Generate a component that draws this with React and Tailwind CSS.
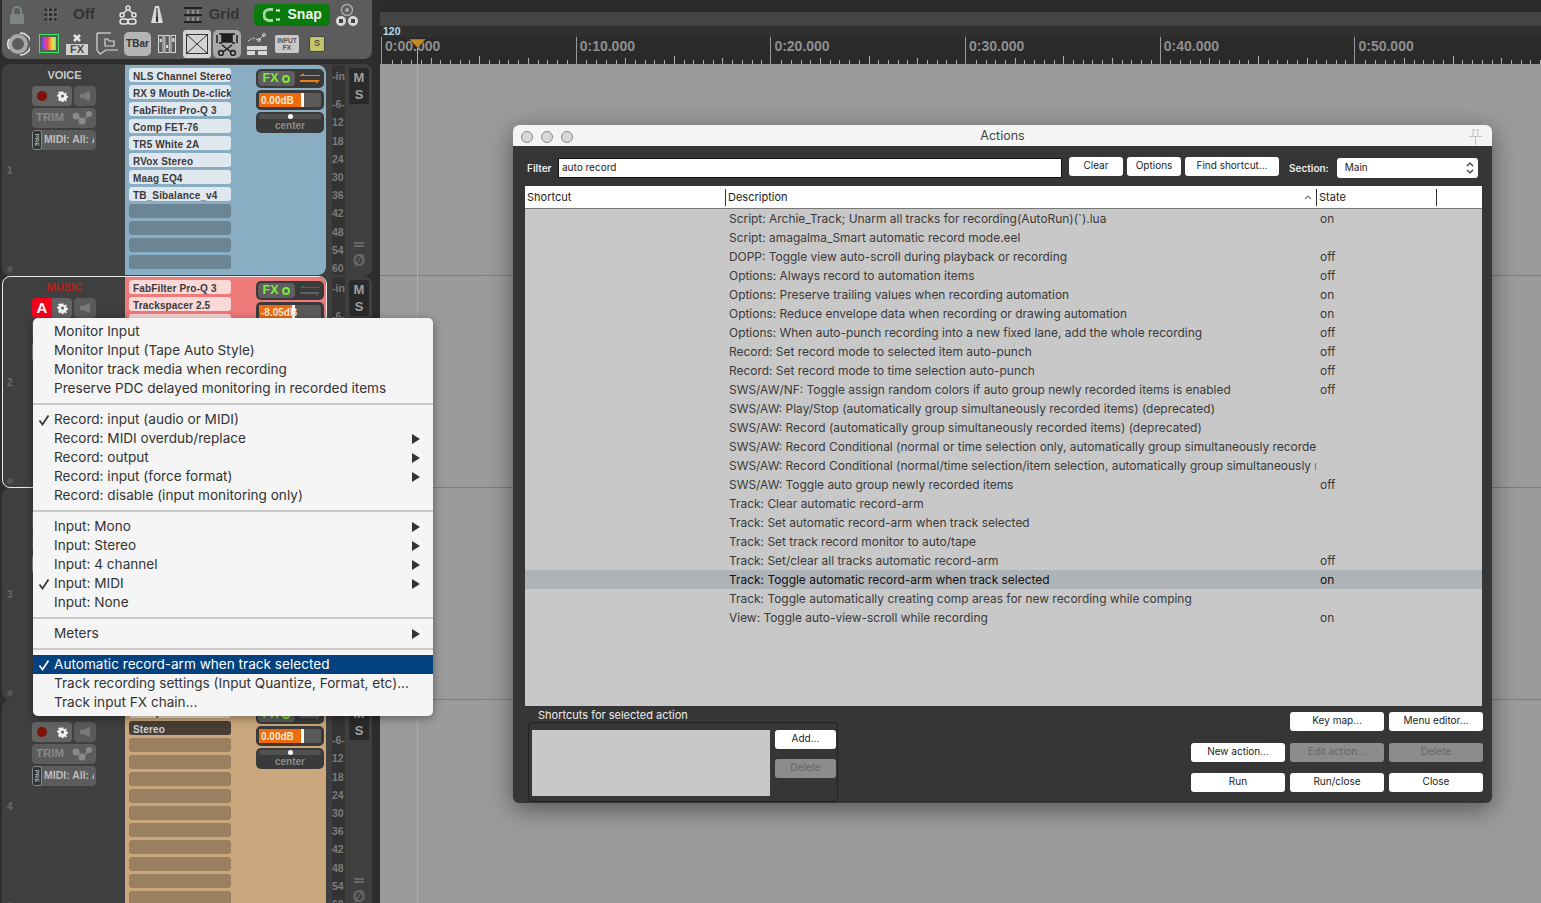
import React from 'react'

const ROWS = [
  ['Script: Archie_Track; Unarm all tracks for recording(AutoRun)(`).lua', 'on'],
  ['Script: amagalma_Smart automatic record mode.eel', ''],
  ['DOPP: Toggle view auto-scroll during playback or recording', 'off'],
  ['Options: Always record to automation items', 'off'],
  ['Options: Preserve trailing values when recording automation', 'on'],
  ['Options: Reduce envelope data when recording or drawing automation', 'on'],
  ['Options: When auto-punch recording into a new fixed lane, add the whole recording', 'off'],
  ['Record: Set record mode to selected item auto-punch', 'off'],
  ['Record: Set record mode to time selection auto-punch', 'off'],
  ['SWS/AW/NF: Toggle assign random colors if auto group newly recorded items is enabled', 'off'],
  ['SWS/AW: Play/Stop (automatically group simultaneously recorded items) (deprecated)', ''],
  ['SWS/AW: Record (automatically group simultaneously recorded items) (deprecated)', ''],
  ['SWS/AW: Record Conditional (normal or time selection only, automatically group simultaneously recorded items)', ''],
  ['SWS/AW: Record Conditional (normal/time selection/item selection, automatically group simultaneously recorded items)', ''],
  ['SWS/AW: Toggle auto group newly recorded items', 'off'],
  ['Track: Clear automatic record-arm', ''],
  ['Track: Set automatic record-arm when track selected', ''],
  ['Track: Set track record monitor to auto/tape', ''],
  ['Track: Set/clear all tracks automatic record-arm', 'off'],
  ['Track: Toggle automatic record-arm when track selected', 'on', true],
  ['Track: Toggle automatically creating comp areas for new recording while comping', ''],
  ['View: Toggle auto-view-scroll while recording', 'on'],
]

const MENU = [
  [
    { label: 'Monitor Input' },
    { label: 'Monitor Input (Tape Auto Style)' },
    { label: 'Monitor track media when recording' },
    { label: 'Preserve PDC delayed monitoring in recorded items' },
  ],
  [
    { label: 'Record: input (audio or MIDI)', checked: true },
    { label: 'Record: MIDI overdub/replace', sub: true },
    { label: 'Record: output', sub: true },
    { label: 'Record: input (force format)', sub: true },
    { label: 'Record: disable (input monitoring only)' },
  ],
  [
    { label: 'Input: Mono', sub: true },
    { label: 'Input: Stereo', sub: true },
    { label: 'Input: 4 channel', sub: true },
    { label: 'Input: MIDI', sub: true, checked: true },
    { label: 'Input: None' },
  ],
  [{ label: 'Meters', sub: true }],
  [
    { label: 'Automatic record-arm when track selected', checked: true, active: true },
    { label: 'Track recording settings (Input Quantize, Format, etc)...' },
    { label: 'Track input FX chain...' },
  ],
]

const TICK_LABELS = ['0:00.000', '0:10.000', '0:20.000', '0:30.000', '0:40.000', '0:50.000']
const TICKS = Array.from({ length: 20 }, (_, i) => i)
const METER_LABELS = ['-inf', '-6-', '12', '18', '24', '30', '36', '42', '48', '54', '60']

const TRACKS = [
  {
    name: 'VOICE',
    number: '1',
    panel: 'bg-[#89aec3]',
    slot: 'bg-[#e0e8ef] text-[#3a3a3a]',
    empty: 'bg-[#6c8594]',
    slots: ['NLS Channel Stereo', 'RX 9 Mouth De-click', 'FabFilter Pro-Q 3', 'Comp FET-76', 'TR5 White 2A', 'RVox Stereo', 'Maag EQ4', 'TB_Sibalance_v4'],
    total: 12,
    volume: '0.00dB',
  },
  {
    name: 'MUSIC',
    number: '2',
    selected: true,
    panel: 'bg-[#ee7a7a]',
    slot: 'bg-[#f9d8d8] text-[#3a3a3a]',
    empty: 'bg-[#b45f5f]',
    slots: ['FabFilter Pro-Q 3', 'Trackspacer 2.5', 'Stereo'],
    total: 12,
    volume: '-8.05dB',
  },
  {
    name: 'DRUMS',
    number: '3',
    panel: 'bg-[#7f9d77]',
    slot: 'bg-[#dfe8dc] text-[#3a3a3a]',
    empty: 'bg-[#64785e]',
    slots: ['Stereo'],
    total: 12,
    volume: '0.00dB',
  },
  {
    name: 'SYNTH',
    number: '4',
    panel: 'bg-[#c9a67c]',
    slot: 'bg-[#efe6da] text-[#3a3a3a]',
    empty: 'bg-[#9a8060]',
    slots: ['Comp', 'Stereo'],
    dark: true,
    total: 12,
    volume: '0.00dB',
  },
]

function LockIcon() {
  return (
    <svg width="16" height="20" viewBox="0 0 16 20" fill="none">
      <path d="M4 9V6a4 4 0 0 1 8 0v3" stroke="#7c8583" strokeWidth="2" />
      <rect x="1" y="9" width="14" height="10" rx="1" fill="#7c8583" />
    </svg>
  )
}

function DotGridIcon() {
  const cells = [0, 5, 10]
  return (
    <svg width="14" height="14" viewBox="0 0 15 15" fill="#2f2f2f">
      {cells.map((y) =>
        cells.map((x) => <rect key={`${x}-${y}`} x={x} y={y} width="4" height="4" stroke="#8a8a8a" strokeWidth="0.5" />)
      )}
    </svg>
  )
}

function RippleIcon() {
  return (
    <svg width="20" height="20" viewBox="0 0 20 20" fill="none" stroke="#e4e4e4" strokeWidth="1.5">
      <circle cx="10" cy="3" r="2" />
      <circle cx="4" cy="10" r="2" />
      <circle cx="16" cy="10" r="2" />
      <path d="M9 5l-4 3.5M11 5l4 3.5" />
      <rect x="2" y="14" width="8" height="5" rx="2.5" />
      <rect x="10" y="14" width="8" height="5" rx="2.5" />
    </svg>
  )
}

function MetronomeIcon() {
  return (
    <svg width="14" height="20" viewBox="0 0 14 20">
      <path d="M5 1h4l4 17H1z" fill="#d9d9d9" />
      <path d="M6.4 3h1.2l.6 10H5.8z" fill="#5a5a5a" />
      <rect x="6" y="12" width="2" height="5" fill="#2d2d2d" />
    </svg>
  )
}

function GridLinesIcon() {
  return (
    <svg width="18" height="16" viewBox="0 0 18 16" fill="none" stroke="#222">
      <path d="M0 1h18M0 8h18M0 15h18" strokeWidth="2" />
      <path d="M4 3v4M9 3v4M14 3v4M4 10v4M9 10v4M14 10v4" stroke="#bdbdbd" />
    </svg>
  )
}

function SnapGlyph() {
  return (
    <svg width="18" height="14" viewBox="0 0 18 14" fill="none">
      <path d="M10 1.500H6.500a5.500 5.500 0 0 0 0 11H10" stroke="#a6d8a6" strokeWidth="3" />
      <path d="M13 2.500h4M13 11.500h4" stroke="#e8ffe8" strokeWidth="2" />
    </svg>
  )
}

function ReelsIcon() {
  return (
    <svg width="24" height="24" viewBox="0 0 24 24">
      <circle cx="12" cy="7" r="5.5" fill="none" stroke="#a8a8a8" strokeWidth="1.5" />
      <circle cx="12" cy="7" r="2" fill="#a8a8a8" />
      <circle cx="6" cy="18" r="5" fill="#d9d9d9" />
      <circle cx="18" cy="18" r="5" fill="#d9d9d9" />
      <path d="M4 16h4v4H4zM16 16h4v4h-4z" fill="#444" />
    </svg>
  )
}

function RingIcon() {
  return (
    <svg width="24" height="24" viewBox="0 0 24 24" fill="none">
      <circle cx="12" cy="12" r="8" stroke="#a8a8a8" strokeWidth="4" />
      <path d="M3 7a11 11 0 0 0 0 10" stroke="#e6e6e6" strokeWidth="1.5" />
      <path d="M14 1a11 11 0 0 1 0 22" stroke="#e6e6e6" strokeWidth="1.5" />
    </svg>
  )
}

function FxRemoveIcon() {
  return (
    <div className="flex w-[22px] flex-col items-center">
      <svg width="10" height="10" viewBox="0 0 10 10" stroke="#e4e4e4" strokeWidth="2.5">
        <path d="M2 2l6 6M8 2l-6 6" />
      </svg>
      <span className="mt-[1px] w-full bg-[#d0d0d0] text-center text-[11px] leading-[11px] font-bold text-[#4a4a4a]">FX</span>
    </div>
  )
}

function FolderIcon() {
  return (
    <svg width="22" height="24" viewBox="0 0 22 24" fill="none" stroke="#dcdcdc">
      <path d="M1 1v17l3 4 6-4h12" strokeWidth="1.2" />
      <path d="M1 1h14" strokeWidth="1.2" />
      <path d="M9 14V7h3l1 2h5v5z" strokeWidth="1.2" />
    </svg>
  )
}

function MixerIcon() {
  return (
    <svg width="18" height="18" viewBox="0 0 18 18" fill="none" stroke="#d8d8d8">
      <rect x="0.5" y="0.5" width="4.5" height="17" />
      <rect x="6.8" y="0.5" width="4.5" height="17" />
      <rect x="13" y="0.5" width="4.5" height="17" />
      <path d="M2.7 4v3M9 10v3M15.3 3v4" strokeWidth="2" />
    </svg>
  )
}

function ScissorsIcon() {
  return (
    <svg width="22" height="24" viewBox="0 0 22 24" fill="none" stroke="#1e1e1e" strokeWidth="1.5">
      <path d="M1 3v8M21 3v8M3 2h3M16 2h3M3 11h3M16 11h3" />
      <rect x="6" y="2" width="10" height="8" fill="#1e1e1e" />
      <path d="M6 13l9 7M16 13l-9 7" />
      <circle cx="5" cy="21" r="2.4" />
      <circle cx="17" cy="21" r="2.4" />
    </svg>
  )
}

function ItemSplitIcon() {
  return (
    <svg width="22" height="24" viewBox="0 0 22 24" fill="none" stroke="#d8d8d8">
      <path d="M2 9l5-3 6 2 5-5" strokeDasharray="2 1" />
      <circle cx="13" cy="8" r="1.5" />
      <circle cx="18" cy="3" r="1.5" />
      <path d="M1 14h20v4H1zM1 19h8v4H1zM12 19h9v4h-9z" fill="#d8d8d8" stroke="none" />
    </svg>
  )
}

function CogIcon({ color = '#f0f0f0' }) {
  return (
    <svg width="11" height="11" viewBox="0 0 20 20" fill={color}>
      <path
        fillRule="evenodd"
        d="M8 0h4l.6 3 2.2.9 2.6-1.7 2.4 2.4-1.7 2.6.9 2.2 3 .6v4l-3 .6-.9 2.2 1.7 2.6-2.4 2.4-2.6-1.7-2.2.9-.6 3H8l-.6-3-2.2-.9-2.6 1.7L.2 16.400l1.7-2.600L1 11.600l-3-.6v-4l3-.6.9-2.200L.2 1.600 2.600-.8l2.600 1.700L7.400 0zM10 6.500a3.500 3.500 0 1 0 0 7 3.500 3.500 0 0 0 0-7z"
        transform="translate(1.8 1) scale(.82)"
      />
    </svg>
  )
}

function SpeakerIcon() {
  return (
    <svg width="12" height="12" viewBox="0 0 12 12" fill="#7a7a7a">
      <path d="M1 4h3l7-3v10L4 8H1z" />
    </svg>
  )
}

function RouteIcon() {
  return (
    <svg width="20" height="14" viewBox="0 0 20 14" fill="#8a8a8a">
      <circle cx="4" cy="5" r="3.500" />
      <circle cx="10" cy="10" r="3.500" />
      <circle cx="17" cy="3" r="3" />
      <path d="M4 4l7 5 5-6 1 1-6 7-7-5z" />
    </svg>
  )
}

function RoutingArrows({ color, tip }) {
  return (
    <svg width="20" height="12" viewBox="0 0 20 12">
      <path d="M0 2h14l6 0v1H0z" fill={color} />
      <path d="M4 0L0 3h4z" fill={color} />
      <path d="M0 7h20l-4 4V9H0z" fill={tip} />
    </svg>
  )
}

function TrackControls({ track }) {
  const routeColor = track.number === '1' ? '#f07d1a' : '#0e7c6c'
  const routeTip = track.number === '1' ? '#f07d1a' : '#5c6064'
  const vuWidth = track.number === '2' ? 'w-[33px]' : 'w-[42px]'
  return (
    <div className="mt-[4px] ml-[25px] flex w-[68px] flex-col gap-[2px]">
      <div className="flex h-[19px] items-center rounded-[5px] bg-[#3a3a3a] px-[2px]">
        <div className="flex h-[15px] w-[37px] items-center justify-center gap-[4px] rounded-[4px] bg-[#5e5e5e]">
          <span className="font-['Liberation_Sans',sans-serif] text-[12.500px] leading-none font-bold text-[#7bec3c]">FX</span>
          <span className="h-[8px] w-[8px] rounded-full border-2 border-[#7bec3c]" />
        </div>
        <span className="ml-[5px] flex">
          <RoutingArrows color={routeColor} tip={routeTip} />
        </span>
      </div>
      <div className="flex h-[20px] items-center rounded-[5px] bg-[#3a3a3a] px-[3px]">
        <div className="relative flex h-[14px] w-full rounded-[2px] bg-[#5a5a5a]">
          <div className={`${vuWidth} h-full bg-[#f0690a]`} />
          <div className="h-full w-[3px] bg-white" />
          <span className="absolute top-0 left-[2px] font-['Liberation_Sans',sans-serif] text-[10px] leading-[15px] font-bold text-[#f4ead8]">
            {track.volume}
          </span>
        </div>
      </div>
      <div className="flex h-[21px] flex-col items-center rounded-[5px] bg-[#3a3a3a] px-[3px] pt-[2px]">
        <div className="relative flex h-[5px] w-full shrink-0 items-center justify-center rounded-[2px] bg-[#505050]">
          <span className="h-[5px] w-[5px] rounded-full bg-white" />
        </div>
        <span className="font-['Liberation_Sans',sans-serif] text-[10px] leading-[14px] font-bold text-[#8a8a8a]">center</span>
      </div>
    </div>
  )
}

function Track({ track }) {
  const blanks = Array.from({ length: track.total - track.slots.length }, (_, i) => i)
  const border = track.selected ? 'border border-[#e8e8e8]' : 'border border-transparent'
  return (
    <div className="flex h-[212px] w-[370px] rounded-[8px] bg-[#3f3f3f]">
      <div className={`flex h-[212px] w-[325px] overflow-hidden rounded-[8px] ${border}`}>
        <div className="relative flex w-[122px] shrink-0 flex-col items-end pr-[29px] font-['Liberation_Sans',sans-serif]">
          <div className={`mt-[4px] h-[13px] w-full pl-[30px] text-center text-[11px] leading-[13px] font-bold ${track.selected ? 'text-[#b5231d]' : 'text-[#c8c8c8]'}`}>
            {track.name}
          </div>
          <div className="mt-[4px] flex gap-[2px]">
            <div className="flex h-[20px] w-[40px] items-center overflow-hidden rounded-[4px] bg-[#636363]">
              {track.selected ? (
                <span className="flex h-full w-[20px] items-center justify-center bg-[#f4001c] text-[15px] font-bold text-white">A</span>
              ) : (
                <span className="flex w-[20px] justify-center">
                  <span className="h-[10px] w-[10px] rounded-full bg-[#7f1208]" />
                </span>
              )}
              <span className="flex w-[20px] justify-center">
                <CogIcon />
              </span>
            </div>
            <div className="flex h-[20px] w-[22px] items-center justify-center rounded-[4px] bg-[#5a5a5a]">
              <SpeakerIcon />
            </div>
          </div>
          <div className="mt-[2px] flex h-[20px] w-[64px] items-center justify-between rounded-[4px] bg-[#5c5c5c] px-[4px]">
            <span className="text-[11.500px] font-bold text-[#8a8a8a]">TRIM</span>
            <RouteIcon />
          </div>
          <div className="mt-[2px] flex h-[20px] w-[64px] items-center overflow-hidden rounded-[4px] bg-[#5c5c5c]">
            <span className="flex h-full w-[10px] shrink-0 items-center justify-center rounded-[3px] border border-[#8a8a8a] bg-[#333]">
              <span className="rotate-90 text-[6px] leading-none font-bold text-[#bdbdbd]">PRE</span>
            </span>
            <span className="ml-[2px] w-[50px] overflow-hidden text-[10.500px] font-bold whitespace-nowrap text-[#bdbdbd]">MIDI: All: A</span>
          </div>
          <span className="absolute top-[98px] left-[4px] text-[10px] font-bold text-[#6a6a6a]">{track.number}</span>
          <span className="absolute bottom-[3px] left-[4px] h-[6px] w-[6px] rounded-full bg-[#555]" />
        </div>
        <div className={`flex min-w-0 flex-1 rounded-r-[8px] ${track.panel}`}>
          <div className="mt-[3px] ml-[4px] flex w-[102px] flex-col gap-[3px]">
            {track.slots.map((name) => (
              <div
                key={name}
                className={`h-[14px] overflow-hidden rounded-[3px] pl-[4px] font-['Liberation_Sans',sans-serif] text-[10px] leading-[17px] font-bold tracking-[0.15px] whitespace-nowrap ${
                  track.dark && name === 'Stereo' ? 'bg-[#473e36] text-[#cfcfcf]' : track.slot
                }`}
              >
                {name}
              </div>
            ))}
            {blanks.map((i) => (
              <div key={i} className={`h-[14px] rounded-[3px] ${track.empty}`} />
            ))}
          </div>
          <TrackControls track={track} />
        </div>
      </div>
      <div className="mt-[1px] ml-[5px] flex h-[210px] w-[13px] flex-col overflow-hidden rounded-[2px] bg-[#333] pt-[2px] font-['Liberation_Sans',sans-serif]">
        {METER_LABELS.map((label, i) => (
          <span key={label} className={`text-[10.500px] leading-[18.200px] font-bold whitespace-nowrap text-[#7c7c7c] ${i === 0 ? 'mb-[10px]' : ''}`}>
            {label}
          </span>
        ))}
      </div>
      <div className="mt-[4px] ml-[4px] flex w-[20px] flex-col items-center font-['Liberation_Sans',sans-serif]">
        <div className="flex h-[36px] w-[20px] flex-col items-center justify-center rounded-[3px] bg-[#2a2a2a] text-[13px] leading-[17px] font-bold text-[#a0a0a0]">
          <span>M</span>
          <span>S</span>
        </div>
        <span className="mt-[138px] h-[5px] w-[10px] border-y-2 border-[#666]" />
        <span className="mt-[5px] text-[16px] leading-[18px] font-bold text-[#666]">Ø</span>
      </div>
    </div>
  )
}

function Toolbar() {
  return (
    <div className="ml-[2px] flex h-[59px] w-[370px] flex-col rounded-b-[8px] bg-[#5c5c5c] font-['Liberation_Sans',sans-serif]">
      <div className="flex h-[28px] items-center pt-[1px]">
        <span className="ml-[7px] flex"><LockIcon /></span>
        <span className="ml-[19px] flex"><DotGridIcon /></span>
        <span className="ml-[15px] text-[15px] font-bold text-[#333]">Off</span>
        <span className="ml-[23px] flex"><RippleIcon /></span>
        <span className="ml-[12px] flex"><MetronomeIcon /></span>
        <span className="ml-[20px] flex"><GridLinesIcon /></span>
        <span className="ml-[7px] text-[15px] font-bold text-[#333]">Grid</span>
        <div className="ml-[14px] flex h-[22px] w-[76px] items-center gap-[7px] rounded-[5px] bg-[#0a7a0a] pl-[9px]">
          <SnapGlyph />
          <span className="text-[14px] font-bold text-[#eef8ee]">Snap</span>
        </div>
        <span className="ml-[5px] flex"><ReelsIcon /></span>
      </div>
      <div className="flex h-[31px] items-center">
        <span className="ml-[4px] flex"><RingIcon /></span>
        <div className="ml-[9px] flex h-[19px] w-[20px] items-center justify-center border border-[#3de860]">
          <span className="h-[13px] w-[14px] bg-[linear-gradient(90deg,#3c5ed8,#d23cc8,#f04a4a,#f0a03c,#e8e84a,#5ce85c)]" />
        </div>
        <span className="ml-[7px] flex"><FxRemoveIcon /></span>
        <span className="ml-[8px] flex"><FolderIcon /></span>
        <div className="ml-[6px] flex h-[24px] w-[27px] items-center justify-center rounded-[5px] bg-[#b5b5b5] text-[10px] font-bold text-[#333]">TBar</div>
        <span className="ml-[7px] flex"><MixerIcon /></span>
        <div className="ml-[7px] flex h-[28px] w-[28px] items-center justify-center rounded-[3px] bg-[#d4d4d4]">
          <svg width="22" height="20" viewBox="0 0 22 20" fill="none" stroke="#333">
            <rect x="0.500" y="0.500" width="21" height="19" />
            <path d="M0 0l22 20M22 0L0 20" />
          </svg>
        </div>
        <div className="ml-[2px] flex h-[28px] w-[28px] items-center justify-center rounded-[5px] bg-[#a8a8a8]">
          <ScissorsIcon />
        </div>
        <span className="ml-[5px] flex"><ItemSplitIcon /></span>
        <div className="ml-[7px] flex h-[18px] w-[24px] flex-col items-center justify-center rounded-[2px] bg-[#c8c8c8] text-[6.500px] leading-[7px] font-bold text-[#555]">
          <span>INPUT</span>
          <span>FX</span>
        </div>
        <div className="ml-[10px] flex h-[16px] w-[16px] items-center justify-center rounded-[2px] border border-[#444] bg-[#c4c46c] text-[9px] font-bold text-[#555]">S</div>
      </div>
    </div>
  )
}

function Ruler() {
  return (
    <div className="flex h-[27px] overflow-hidden bg-[#2a2a2a] pl-[1px] font-['Liberation_Sans',sans-serif]">
      {TICK_LABELS.map((label) => (
        <div key={label} className="flex h-full w-[194.700px] shrink-0 flex-col border-l border-[#9a9a9a]">
          <span className="pl-[3px] text-[14px] leading-[18px] font-bold text-[#8f8f8f]">{label}</span>
          <div className="mt-auto flex h-[8px] items-end">
            {TICKS.map((i) => (
              <div key={i} className="w-[9.730px] shrink-0">
                {i === 10 && <div className="h-[8px] w-px bg-[#b0b0b0]" />}
                {(i === 5 || i === 15) && <div className="h-[6px] w-px bg-[#b0b0b0]" />}
                {i % 5 !== 0 && <div className="h-[4px] w-px bg-[#b0b0b0]" />}
              </div>
            ))}
          </div>
        </div>
      ))}
    </div>
  )
}

function Arrange() {
  return (
    <div className="relative min-w-0 flex-1">
      <div className="h-[12px] bg-[#2b2b2b]" />
      <div className="h-[14px] bg-[#444444]" />
      <div className="h-[11px] bg-[#303030] pl-[3px] font-['Liberation_Sans',sans-serif] text-[10.500px] leading-[11px] font-bold text-[#b5dcf2]">120</div>
      <Ruler />
      <div className="h-[212px] border-b border-[#7a7a7a] bg-[#9b9b9b]" />
      <div className="h-[212px] border-b border-[#7a7a7a] bg-[#9b9b9b]" />
      <div className="h-[212px] border-b border-[#7a7a7a] bg-[#9b9b9b]" />
      <div className="h-[203px] bg-[#9b9b9b]" />
      <div className="absolute top-[39px] bottom-0 left-[37px] w-px bg-[#e8a33d]" />
      <svg className="absolute top-[39px] left-[29px]" width="17" height="9" viewBox="0 0 17 9">
        <path d="M0 0h17L8.500 9z" fill="#c98a22" stroke="#2a2a2a" strokeWidth="0.500" />
      </svg>
    </div>
  )
}

function MenuItem({ item }) {
  const rowClass = item.active ? 'bg-[#03417f] text-white' : 'text-[#333]'
  return (
    <div className={`flex h-[19px] items-center ${rowClass}`}>
      <span className="flex w-[21px] justify-end pr-[4px]">
        {item.checked && (
          <svg width="12" height="12" viewBox="0 0 12 12" fill="none" stroke={item.active ? '#fff' : '#333'} strokeWidth="1.700">
            <path d="M1.500 6.500L4.500 10.500L10.500 1.500" />
          </svg>
        )}
      </span>
      <span className="flex-1 text-[13.600px] leading-[19px] whitespace-nowrap">{item.label}</span>
      {item.sub && (
        <svg className="mr-[13px]" width="8" height="10" viewBox="0 0 8 10" fill="#333">
          <path d="M0 0l8 5-8 5z" />
        </svg>
      )}
    </div>
  )
}

function TrackMenu() {
  return (
    <div className="absolute top-[318px] left-[33px] w-[400px] rounded-[5px] bg-[#f5f5f5] py-[4px] font-['Inter',sans-serif] shadow-[0_2px_10px_rgba(0,0,0,0.4)]">
      {MENU.map((group, i) => (
        <div key={group[0].label}>
          {i > 0 && <div className="my-[5px] h-[2px] bg-[#c9c9c9]" />}
          {group.map((item) => (
            <MenuItem key={item.label} item={item} />
          ))}
        </div>
      ))}
    </div>
  )
}

function DialogButton({ label, disabled, className = 'w-[94px]' }) {
  const state = disabled ? 'bg-[#8c8c8c] text-[#666]' : 'bg-white text-[#222]'
  return (
    <div className={`flex h-[19px] shrink-0 items-center justify-center rounded-[3px] pb-[2px] text-[10px] ${state} ${className}`}>
      {label}
    </div>
  )
}

function ActionsDialog() {
  return (
    <div className="absolute top-[125px] left-[513px] flex h-[678px] w-[979px] flex-col overflow-hidden rounded-[6px] bg-[#363636] font-['Inter',sans-serif] shadow-[0_6px_24px_rgba(0,0,0,0.45)]">
      <div className="relative flex h-[21px] shrink-0 items-center justify-center bg-[#f4f4f4] pt-[2px] text-[12.500px] text-[#444]">
        <div className="absolute left-[8px] flex gap-[8px]">
          <span className="h-[12px] w-[12px] rounded-full border border-[#8a8a8a] bg-[#d8d8d8]" />
          <span className="h-[12px] w-[12px] rounded-full border border-[#8a8a8a] bg-[#d8d8d8]" />
          <span className="h-[12px] w-[12px] rounded-full border border-[#8a8a8a] bg-[#d8d8d8]" />
        </div>
        Actions
        <svg className="absolute right-[9px]" width="15" height="16" viewBox="0 0 15 16" fill="none" stroke="#c4c4c4">
          <path d="M4 1h7M5 1v6M10 1v6M1 7.500h13M7.500 8v8" />
        </svg>
      </div>

      <div className="mt-[12px] flex h-[20px] shrink-0 items-center pl-[14px] text-[10px]">
        <span className="w-[31px] font-semibold text-[#eeeeee]">Filter</span>
        <div className="flex h-[20px] w-[504px] items-center border border-[#111] bg-white pb-[2px] pl-[3px] text-[#222]">auto record</div>
        <DialogButton label="Clear" className="ml-[7px] -mt-[3px] w-[54px]" />
        <DialogButton label="Options" className="ml-[4px] -mt-[3px] w-[54px]" />
        <DialogButton label="Find shortcut..." className="ml-[4px] -mt-[3px] w-[94px]" />
        <span className="ml-[10px] font-semibold text-[#eeeeee]">Section:</span>
        <div className="ml-[8px] flex h-[20px] w-[141px] items-center justify-between rounded-[3px] bg-white pr-[4px] pl-[8px] text-[#222]">
          <span className="pb-[2px]">Main</span>
          <svg width="8" height="14" viewBox="0 0 8 14" fill="none" stroke="#333" strokeWidth="1.200">
            <path d="M1 5l3-3 3 3M1 9l3 3 3-3" />
          </svg>
        </div>
      </div>

      <div className="mt-[8px] ml-[12px] flex h-[520px] w-[957px] shrink-0 flex-col">
        <div className="flex h-[23px] shrink-0 items-center border-b border-[#777] bg-white text-[11px] text-[#222]">
          <span className="w-[200px] pl-[2px]">Shortcut</span>
          <span className="relative flex h-[17px] w-[591px] items-center border-l border-[#333] pl-[2px]">
            Description
            <svg className="absolute right-[4px]" width="8" height="5" viewBox="0 0 8 5" fill="none" stroke="#777" strokeWidth="1.200">
              <path d="M1 4l3-3 3 3" />
            </svg>
          </span>
          <span className="flex h-[17px] w-[121px] items-center border-x border-[#333] pl-[2px]">State</span>
        </div>
        <div className="flex-1 bg-[#c8c8c8]">
          {ROWS.map(([desc, state, selected]) => (
            <div key={desc} className={`flex h-[19px] items-center text-[11.950px] ${selected ? 'bg-[#aeb3b8] text-[#111]' : 'text-[#3a3a3a]'}`}>
              <span className="w-[204px] shrink-0" />
              <span className="w-[587px] shrink-0 overflow-hidden whitespace-nowrap">{desc}</span>
              <span className="pl-[4px]">{state}</span>
            </div>
          ))}
        </div>
      </div>

      <div className="flex min-h-0 flex-1 pl-[15px]">
        <div className="flex w-[310px] shrink-0 flex-col">
          <span className="pt-[2px] pl-[10px] text-[11px] leading-[14px] text-[#eeeeee]">Shortcuts for selected action</span>
          <div className="flex h-[80px] rounded-[4px] border border-[#222] pt-[7px] pl-[3px]">
            <div className="h-[66px] w-[238px] shrink-0 bg-[#c8c8c8]" />
            <div className="ml-[5px] flex flex-col gap-[10px]">
              <DialogButton label="Add..." className="w-[61px]" />
              <DialogButton label="Delete" disabled className="w-[61px]" />
            </div>
          </div>
        </div>
        <div className="ml-[353px] flex flex-col pt-[6px]">
          <div className="flex justify-end gap-[5px]">
            <DialogButton label="Key map..." />
            <DialogButton label="Menu editor..." />
          </div>
          <div className="mt-[12px] flex gap-[5px]">
            <DialogButton label="New action..." />
            <DialogButton label="Edit action..." disabled />
            <DialogButton label="Delete" disabled />
          </div>
          <div className="mt-[11px] flex gap-[5px]">
            <DialogButton label="Run" />
            <DialogButton label="Run/close" />
            <DialogButton label="Close" />
          </div>
        </div>
      </div>
    </div>
  )
}

export default function App() {
  return (
    <div className="relative flex h-[903px] w-[1541px] overflow-hidden bg-[#9b9b9b]">
      <div className="h-full w-[380px] shrink-0 overflow-hidden bg-[#2d2d2d]">
        <Toolbar />
        <div className="mt-[5px] ml-[2px]">
          {TRACKS.map((track) => (
            <Track key={track.number} track={track} />
          ))}
        </div>
      </div>
      <Arrange />
      <ActionsDialog />
      <TrackMenu />
    </div>
  )
}
